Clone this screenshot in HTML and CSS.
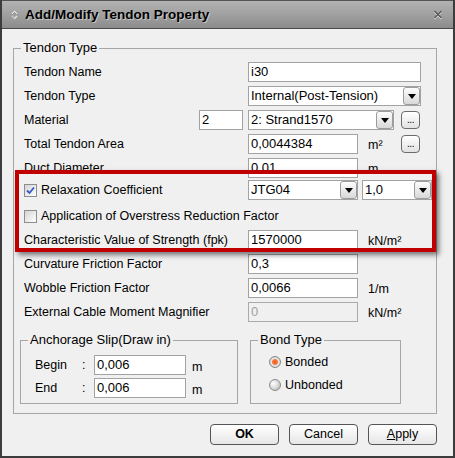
FILE: index.html
```html
<!DOCTYPE html>
<html>
<head>
<meta charset="utf-8">
<link rel="stylesheet" href="styles.css">
</head>
<body>
<div class="window">
  <div class="titlebar">
    <svg class="ticon" width="7" height="10" viewBox="0 0 7 10">
      <path d="M1 4 L3.5 1.5 L6 4" fill="none" stroke="#e8e8e8" stroke-width="1.3"/>
      <path d="M1 6 L3.5 8.5 L6 6" fill="none" stroke="#e8e8e8" stroke-width="1.3"/>
      <path d="M1.5 4.5 L3.5 2.5 L5.5 4.5 M1.5 6.5 L3.5 8.5" fill="none" stroke="#6a6a6a" stroke-width="0.6"/>
    </svg>
    <span class="title">Add/Modify Tendon Property</span>
    <svg class="close" width="10" height="10" viewBox="0 0 10 10">
      <path d="M1.5 2 L8.5 9 M8.5 2 L1.5 9" stroke="#e0e0e0" stroke-width="1.6"/>
      <path d="M1.5 1 L8.5 8 M8.5 1 L1.5 8" stroke="#5c5c5c" stroke-width="1.6"/>
    </svg>
  </div>
  <div class="body">
    <fieldset class="group main">
      <legend>Tendon Type</legend>
      <div class="rows">
        <div class="row">
          <span class="label">Tendon Name</span>
          <span class="input w173">i30</span>
        </div>
        <div class="row">
          <span class="label">Tendon Type</span>
          <span class="select w173"><span class="sel-text">Internal(Post-Tension)</span><span class="arrow"></span></span>
        </div>
        <div class="row">
          <span class="label mat">Material</span>
          <span class="input w44">2</span>
          <span class="select w146 ml5"><span class="sel-text">2: Strand1570</span><span class="arrow"></span></span>
          <span class="dots ml7">...</span>
        </div>
        <div class="row">
          <span class="label">Total Tendon Area</span>
          <span class="input w110">0,0044384</span>
          <span class="unit">m²</span>
          <span class="dots">...</span>
        </div>
        <div class="row h22">
          <span class="label">Duct Diameter</span>
          <span class="input w110">0,01</span>
          <span class="unit">m</span>
        </div>
        <div class="row h26">
          <span class="label"><span class="check on"><svg width="11" height="11" viewBox="0 0 11 11"><path d="M2 5.5 L4.5 8 L9 2.5" fill="none" stroke="#3458c4" stroke-width="1.8"/></svg></span>Relaxation Coefficient</span>
          <span class="select w110"><span class="sel-text">JTG04</span><span class="arrow"></span></span>
          <span class="select w70 ml4"><span class="sel-text">1,0</span><span class="arrow"></span></span>
        </div>
        <div class="row">
          <span class="label free"><span class="check"></span>Application of Overstress Reduction Factor</span>
        </div>
        <div class="row">
          <span class="label">Characteristic Value of Strength (fpk)</span>
          <span class="input w110">1570000</span>
          <span class="unit">kN/m²</span>
        </div>
        <div class="row">
          <span class="label">Curvature Friction Factor</span>
          <span class="input w110">0,3</span>
        </div>
        <div class="row">
          <span class="label">Wobble Friction Factor</span>
          <span class="input w110">0,0066</span>
          <span class="unit">1/m</span>
        </div>
        <div class="row">
          <span class="label">External Cable Moment Magnifier</span>
          <span class="input w110 disabled">0</span>
          <span class="unit">kN/m²</span>
        </div>
        <div class="subgroups">
          <fieldset class="group anch">
            <legend>Anchorage Slip(Draw in)</legend>
            <div class="subrows">
              <div class="srow"><span class="slabel">Begin</span><span class="colon">:</span><span class="input w92">0,006</span><span class="sunit">m</span></div>
              <div class="srow"><span class="slabel">End</span><span class="colon">:</span><span class="input w92">0,006</span><span class="sunit">m</span></div>
            </div>
          </fieldset>
          <fieldset class="group bond">
            <legend>Bond Type</legend>
            <div class="subrows radios">
              <div class="srow"><span class="radio on"></span>Bonded</div>
              <div class="srow"><span class="radio"></span>Unbonded</div>
            </div>
          </fieldset>
        </div>
      </div>
    </fieldset>
    <div class="buttons">
      <span class="btn bold">OK</span>
      <span class="btn">Cancel</span>
      <span class="btn"><u>A</u>pply</span>
    </div>
  </div>
  <div class="annot"></div>
</div>
</body>
</html>
```

FILE: styles.css
```css
* { box-sizing: border-box; }
html, body { margin: 0; padding: 0; }
body {
  width: 455px;
  height: 458px;
  overflow: hidden;
  font-family: "Liberation Sans", Arial, sans-serif;
  font-size: 12.5px;
  color: #000;
  background: #f0f0f0;
}
.window {
  position: relative;
  width: 455px;
  height: 458px;
  display: flex;
  flex-direction: column;
  border: 2px solid #3c3c3c;
  border-top: 0;
  background: #f0f0f0;
}
.titlebar {
  height: 29px;
  flex: none;
  display: flex;
  align-items: center;
  padding: 0 10px 0 9px;
  border-top: 1px solid #555;
  border-bottom: 1px solid #4a4a4a;
  background: linear-gradient(#b2b2b2, #a2a2a2 45%, #8c8c8c);
}
.ticon { flex: none; margin-right: 7px; }
.title {
  flex: 1;
  font-size: 13.5px;
  font-weight: bold;
  text-shadow: 1px 1px 0 rgba(255, 255, 255, 0.45);
  white-space: nowrap;
}
.close { flex: none; }
.body {
  flex: 1;
  display: flex;
  flex-direction: column;
  padding: 11px 16px 0 11px;
}
fieldset.group {
  margin: 0;
  padding: 0;
  min-width: 0;
  border: 1px solid #a6a6a6;
}
legend {
  margin-left: 7px;
  padding: 0 2px;
  font-size: 13px;
  line-height: 16px;
}
.rows { padding: 6px 0 9px 10px; }
.row {
  display: flex;
  align-items: flex-start;
  height: 24px;
}
.row.h22 { height: 22px; }
.row.h26 { height: 26px; }
.label {
  width: 224px;
  flex: none;
  height: 20px;
  line-height: 21px;
  white-space: nowrap;
  display: flex;
  align-items: center;
}
.label.mat { width: 175px; }
.label.free { width: auto; }
.input {
  flex: none;
  height: 20px;
  border: 1px solid #a2a2a2;
  background: #fff;
  font-size: 13px;
  line-height: 18px;
  padding: 0 2px;
  white-space: nowrap;
  overflow: hidden;
}
.input.disabled { background: #f0f0f0; color: #a0a0a0; border-color: #aaa; }
.w173 { width: 173px; }
.w146 { width: 146px; }
.w110 { width: 110px; }
.w92 { width: 92px; }
.w70 { width: 70px; }
.w44 { width: 44px; }
.ml4 { margin-left: 4px; }
.ml5 { margin-left: 5px; }
.ml7 { margin-left: 7px; }
.select {
  flex: none;
  display: flex;
  height: 20px;
  border: 1px solid #a2a2a2;
  background: #fff;
}
.sel-text {
  flex: 1;
  padding: 0 2px;
  font-size: 13px;
  line-height: 18px;
  white-space: nowrap;
  overflow: hidden;
}
.arrow {
  flex: none;
  width: 17px;
  height: 18px;
  border: 1px solid #9c9c9c;
  border-radius: 3px;
  background: linear-gradient(#fdfdfd, #d8d8d8);
  display: flex;
  align-items: center;
  justify-content: center;
}
.arrow::after {
  content: "";
  border-left: 4px solid transparent;
  border-right: 4px solid transparent;
  border-top: 5px solid #000;
  margin-top: 1px;
}
.unit {
  flex: none;
  width: 33px;
  margin-left: 10px;
  line-height: 22px;
  height: 20px;
  white-space: nowrap;
}
.dots {
  flex: none;
  width: 19px;
  height: 18px;
  margin-top: 1px;
  border: 1px solid #6c6c6c;
  border-radius: 4px;
  background: linear-gradient(#ffffff, #e2e2e2);
  font-size: 10px;
  line-height: 15px;
  text-align: center;
  letter-spacing: -0.5px;
}
.check {
  flex: none;
  width: 13px;
  height: 13px;
  margin-right: 4px;
  border: 1px solid #8d8d8d;
  background: linear-gradient(135deg, #d4d4d4, #ffffff);
  display: flex;
  align-items: center;
  justify-content: center;
}
.subgroups {
  display: flex;
  gap: 12px;
  margin: 6px 0 0 -4px;
}
.anch { width: 218px; }
.bond { width: 151px; }
.subrows { padding: 7px 0 5px 14px; }
.subrows.radios { padding: 4px 0 5px 18px; }
.srow {
  display: flex;
  align-items: center;
  height: 20px;
  white-space: nowrap;
}
.srow + .srow { margin-top: 3px; }
.slabel { width: 47px; }
.colon { width: 12px; }
.sunit { margin-left: 6px; padding-top: 3px; }
.radio {
  flex: none;
  width: 12px;
  height: 12px;
  margin-right: 4px;
  border-radius: 50%;
  border: 1px solid #8a8a8a;
  background: radial-gradient(circle at 35% 35%, #ffffff, #d6d6d6 55%, #a9a9a9);
}
.radio.on {
  background: radial-gradient(circle at 50% 50%, #f25a1e 0, #f57a3c 2.5px, #e8e8e8 3.5px, #c4c4c4 6px);
}
.buttons {
  display: flex;
  justify-content: flex-end;
  gap: 10px;
  margin-top: 10px;
}
.btn {
  width: 69px;
  height: 21px;
  border: 1px solid #555;
  border-radius: 4px;
  background: linear-gradient(#ffffff, #e6e6e6);
  text-align: center;
  line-height: 19px;
  font-size: 12.5px;
}
.btn.bold { font-weight: bold; }
.annot {
  position: absolute;
  left: 13px;
  top: 170px;
  width: 421px;
  height: 82px;
  border: 4px solid #c00000;
  box-shadow: 3px 3px 5px rgba(0, 0, 0, 0.5);
  pointer-events: none;
}
```
